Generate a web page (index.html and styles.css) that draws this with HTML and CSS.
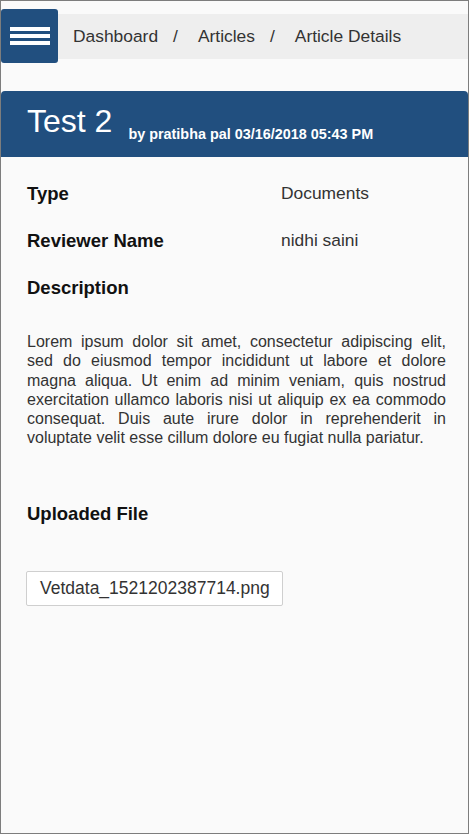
FILE: index.html
```html
<!DOCTYPE html>
<html>
<head>
<meta charset="utf-8">
<link rel="stylesheet" href="styles.css">
</head>
<body>
<div class="page">
  <header class="topbar">
    <button class="menu-btn" aria-label="Menu">
      <span class="bar"></span><span class="bar"></span><span class="bar"></span>
    </button>
    <nav class="crumbs">
      <span class="crumb">Dashboard</span>
      <span class="sep">/</span>
      <span class="crumb">Articles</span>
      <span class="sep">/</span>
      <span class="crumb">Article Details</span>
    </nav>
  </header>

  <section class="article">
    <div class="title-bar">
      <h1 class="title">Test 2</h1><span class="byline">by pratibha pal 03/16/2018 05:43 PM</span>
    </div>

    <div class="details">
      <div class="row">
        <div class="label">Type</div>
        <div class="value">Documents</div>
      </div>
      <div class="row">
        <div class="label">Reviewer Name</div>
        <div class="value">nidhi saini</div>
      </div>
      <div class="row">
        <div class="label">Description</div>
      </div>
      <p class="desc">Lorem ipsum dolor sit amet, consectetur adipiscing elit, sed do eiusmod tempor incididunt ut labore et dolore magna aliqua. Ut enim ad minim veniam, quis nostrud exercitation ullamco laboris nisi ut aliquip ex ea commodo consequat. Duis aute irure dolor in reprehenderit in voluptate velit esse cillum dolore eu fugiat nulla pariatur.</p>
      <div class="row upload-row">
        <div class="label">Uploaded File</div>
      </div>
      <div class="file">Vetdata_1521202387714.png</div>
    </div>
  </section>
</div>
</body>
</html>
```

FILE: styles.css
```css
* { box-sizing: border-box; }
html, body { margin: 0; padding: 0; }
body {
  font-family: "Liberation Sans", Arial, sans-serif;
  color: #333;
}
.page {
  width: 469px;
  height: 834px;
  border: 1px solid #7d7d7d;
  background: #fafafa;
  overflow: hidden;
}
.topbar {
  display: flex;
  align-items: center;
  margin-top: 8px;
}
.menu-btn {
  flex: none;
  width: 57px;
  height: 54px;
  border: 0;
  border-radius: 3px;
  background: #214f7f;
  padding: 0 0 0 9px;
  display: flex;
  flex-direction: column;
  justify-content: center;
  gap: 3px;
}
.menu-btn .bar {
  display: block;
  width: 40px;
  height: 4px;
  background: #fff;
}
.crumbs {
  flex: 1;
  height: 45px;
  background: #eeeeee;
  display: flex;
  align-items: center;
  padding-left: 15px;
  font-size: 17.4px;
  color: #333;
  white-space: nowrap;
}
.sep {
  margin: 0 20px 0 15px;
}
.article {
  margin-top: 28px;
}
.title-bar {
  height: 66px;
  background: #214f7f;
  border-radius: 4px 4px 0 0;
  padding: 12px 0 0 26px;
  color: #fff;
  white-space: nowrap;
}
.title {
  display: inline-block;
  margin: 0;
  font-size: 32px;
  font-weight: normal;
  line-height: 36px;
  vertical-align: baseline;
}
.byline {
  display: inline-block;
  margin-left: 16px;
  font-size: 14.4px;
  font-weight: bold;
  vertical-align: -7px;
}
.details {
  padding: 13px 25px 0 25px;
}
.row {
  display: grid;
  grid-template-columns: 255px 1fr;
  align-items: center;
  height: 47px;
}
.label {
  font-size: 18.5px;
  font-weight: bold;
  color: #111;
  padding-left: 1px;
}
.value {
  font-size: 17.4px;
  color: #333;
}
.desc {
  margin: 21px 0 0 1px;
  font-size: 16px;
  line-height: 19.3px;
  text-align: justify;
  color: #333;
  width: 419px;
}
.upload-row {
  margin-top: 43px;
}
.file {
  display: inline-block;
  margin-top: 33px;
  height: 35px;
  width: 257px;
  border: 1px solid #cfcfcf;
  border-radius: 2px;
  background: #fff;
  padding: 0 0 0 13px;
  font-size: 17.5px;
  line-height: 33px;
  color: #333;
}
```
